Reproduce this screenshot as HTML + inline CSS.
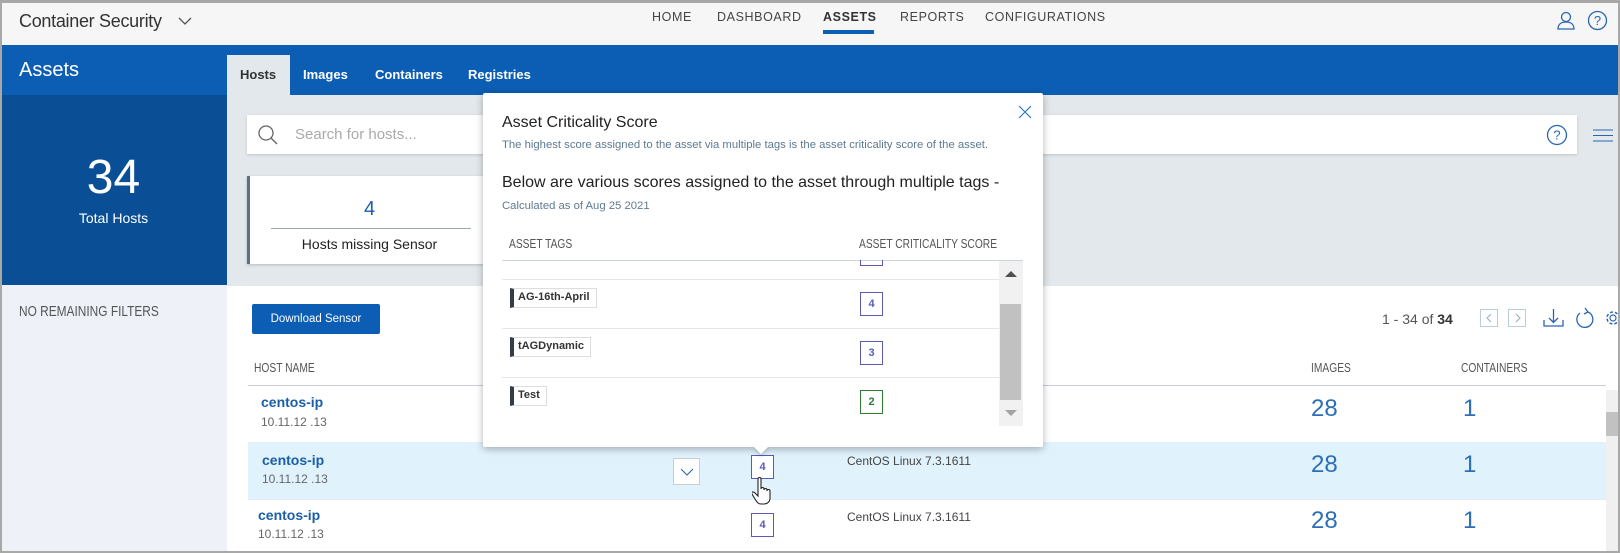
<!DOCTYPE html>
<html><head><meta charset="utf-8"><style>
*{box-sizing:border-box;margin:0;padding:0}
body{width:1620px;height:553px;overflow:hidden;font-family:"Liberation Sans",sans-serif;background:#fff;position:relative;color:#333}
.a{position:absolute}
.cond{font-family:"Liberation Sans",sans-serif;transform:scaleX(0.82);transform-origin:0 0;white-space:nowrap}
.nav{font-size:12.5px;color:#444;letter-spacing:0.6px;top:10px}
.badge{position:absolute;border:1px solid #5a5ab8;color:#5a5ab8;font-size:11px;font-weight:bold;text-align:center;width:23px;height:24px;line-height:22px;background:#fff}
.tag{position:absolute;border:1px solid #ddd;border-left:4px solid #333d47;font-size:11px;font-weight:bold;color:#333;padding:2px 6px 2px 4px;height:20px;background:#fff}
.hn{position:absolute;color:#1a5fa8;font-weight:bold;font-size:14px}
.ip{position:absolute;color:#666;font-size:12px}
.big{position:absolute;color:#2a6fb8;font-size:24px}
</style></head><body>
<div class="a" style="left:0;top:0;width:1620px;height:553px;border:2px solid #a8a8a8;border-top-width:3px;z-index:50;pointer-events:none"></div>
<div class="a" style="left:0;top:0;width:1620px;height:45px;background:#f6f6f6"></div>
<div class="a" style="left:19px;top:11px;font-size:18px;color:#333;letter-spacing:-0.3px">Container Security</div>
<svg class="a" style="left:178px;top:17px" width="14" height="9"><path d="M1 1l6 6 6-6" stroke="#555" fill="none" stroke-width="1.3"/></svg>
<div class="a nav" style="left:652px">HOME</div>
<div class="a nav" style="left:717px">DASHBOARD</div>
<div class="a nav" style="left:823px;font-weight:bold;color:#333">ASSETS</div>
<div class="a" style="left:823px;top:30px;width:51px;height:4px;background:#0b5eb3"></div>
<div class="a nav" style="left:900px">REPORTS</div>
<div class="a nav" style="left:985px">CONFIGURATIONS</div>
<svg class="a" style="left:1557px;top:11px" width="18" height="19"><circle cx="9" cy="6" r="4.5" stroke="#2a66b0" fill="none" stroke-width="1.3"/><path d="M1 18c0-5 3.5-7 8-7s8 2 8 7z" stroke="#2a66b0" fill="none" stroke-width="1.3"/></svg>
<svg class="a" style="left:1587px;top:10px" width="21" height="21"><circle cx="10.5" cy="10.5" r="9" stroke="#2a66b0" fill="none" stroke-width="1.3"/><text x="10.5" y="15" text-anchor="middle" font-size="13" fill="#2a66b0" font-family="Liberation Sans">?</text></svg>
<div class="a" style="left:0;top:45px;width:1620px;height:50px;background:#0b5eb3"></div>
<div class="a" style="left:19px;top:59px;font-size:20px;color:#fff">Assets</div>
<div class="a" style="left:227px;top:55px;width:63px;height:40px;background:#e3e8ec"></div>
<div class="a" style="left:240px;top:67px;font-size:13px;font-weight:bold;color:#333">Hosts</div>
<div class="a" style="left:303px;top:67px;font-size:13px;font-weight:bold;color:#fff">Images</div>
<div class="a" style="left:375px;top:67px;font-size:13px;font-weight:bold;color:#fff">Containers</div>
<div class="a" style="left:468px;top:67px;font-size:13px;font-weight:bold;color:#fff">Registries</div>
<div class="a" style="left:0;top:95px;width:227px;height:190px;background:#0a4f95"></div>
<div class="a" style="left:0;top:150px;width:227px;text-align:center;font-size:48px;color:#fff">34</div>
<div class="a" style="left:0;top:210px;width:227px;text-align:center;font-size:14px;color:#fff">Total Hosts</div>
<div class="a" style="left:0;top:285px;width:227px;height:268px;background:#eef2f8"></div>
<div class="a cond" style="left:19px;top:304px;font-size:14.5px;color:#555">NO REMAINING FILTERS</div>
<div class="a" style="left:227px;top:95px;width:1393px;height:191px;background:#e3e8ec"></div>
<div class="a" style="left:247px;top:115px;width:1330px;height:39px;background:#fff;box-shadow:0 1px 3px rgba(0,0,0,.15)"></div>
<svg class="a" style="left:257px;top:124px" width="22" height="22"><circle cx="9" cy="9" r="7" stroke="#666" fill="none" stroke-width="1.3"/><path d="M14 14l6 6" stroke="#666" stroke-width="1.4"/></svg>
<div class="a" style="left:295px;top:126px;font-size:15px;color:#aaa">Search for hosts...</div>
<svg class="a" style="left:1546px;top:124px" width="22" height="22"><circle cx="11" cy="11" r="9.5" stroke="#2a66b0" fill="none" stroke-width="1.3"/><text x="11" y="15.5" text-anchor="middle" font-size="13" fill="#2a66b0" font-family="Liberation Sans">?</text></svg>
<svg class="a" style="left:1593px;top:129px" width="22" height="14"><path d="M0 1h20M0 6.5h20M0 12h20" stroke="#2a66b0" stroke-width="1"/></svg>
<div class="a" style="left:247px;top:176px;width:250px;height:88px;background:#fff;border-left:3px solid #5d7080;box-shadow:0 1px 3px rgba(0,0,0,.2)"></div>
<div class="a" style="left:268px;top:198px;width:203px;text-align:center;font-size:20px;color:#1a5fa8">4</div>
<div class="a" style="left:271px;top:228px;width:200px;height:1px;background:#9aa8b5"></div>
<div class="a" style="left:268px;top:236px;width:203px;text-align:center;font-size:14px;color:#222">Hosts missing Sensor</div>
<div class="a" style="left:252px;top:304px;width:128px;height:30px;background:#0b5eb3;border-radius:2px;color:#fff;font-size:11.5px;text-align:center;line-height:30px">Download Sensor</div>
<div class="a" style="left:1382px;top:311px;font-size:14px;color:#555">1 - 34 of <b style="color:#333">34</b></div>
<div class="a" style="left:1480px;top:309px;width:18px;height:18px;border:1px solid #b8cde0"></div>
<svg class="a" style="left:1485px;top:313px" width="8" height="10"><path d="M6 1L2 5l4 4" stroke="#9ab" fill="none"/></svg>
<div class="a" style="left:1508px;top:309px;width:18px;height:18px;border:1px solid #b8cde0"></div>
<svg class="a" style="left:1514px;top:313px" width="8" height="10"><path d="M2 1l4 4-4 4" stroke="#9ab" fill="none"/></svg>
<svg class="a" style="left:1543px;top:308px" width="22" height="20"><path d="M1 12v6h19v-6M10.5 1v13M6 10l4.5 4.5L15 10" stroke="#2a66b0" fill="none" stroke-width="1.3"/></svg>
<svg class="a" style="left:1574px;top:307px" width="20" height="22"><path d="M14 5a8 8 0 1 1-8 1" stroke="#2a66b0" fill="none" stroke-width="1.3"/><path d="M11 1l3 4-4 2" stroke="#2a66b0" fill="none" stroke-width="1.3"/></svg>
<svg class="a" style="left:1603px;top:308px" width="17" height="20"><circle cx="10" cy="10" r="6" stroke="#2a66b0" fill="none" stroke-width="1.5" stroke-dasharray="3 2"/><circle cx="10" cy="10" r="3" stroke="#2a66b0" fill="none" stroke-width="1.2"/></svg>
<div class="a cond" style="left:254px;top:361px;font-size:12.5px;color:#555">HOST NAME</div>
<div class="a cond" style="left:1311px;top:361px;font-size:12.5px;color:#555">IMAGES</div>
<div class="a cond" style="left:1461px;top:361px;font-size:12.5px;color:#555">CONTAINERS</div>
<div class="a" style="left:248px;top:385px;width:1358px;height:1px;background:#ccd"></div>
<div class="a" style="left:248px;top:442px;width:1358px;height:57px;background:#e0f2fc"></div>
<div class="a" style="left:248px;top:499px;width:1358px;height:1px;background:#e3ecf2"></div>
<div class="hn" style="left:261px;top:394px">centos-ip</div><div class="ip" style="left:261px;top:415px">10.11.12 .13</div>
<div class="hn" style="left:262px;top:452px">centos-ip</div><div class="ip" style="left:262px;top:472px">10.11.12 .13</div>
<div class="hn" style="left:258px;top:507px">centos-ip</div><div class="ip" style="left:258px;top:527px">10.11.12 .13</div>
<div class="a" style="left:673px;top:458px;width:27px;height:27px;background:#fff;border:1px solid #ccc"></div>
<svg class="a" style="left:680px;top:468px" width="14" height="8"><path d="M1 1l6 6 6-6" stroke="#2a66b0" fill="none" stroke-width="1.1"/></svg>
<div class="badge" style="left:751px;top:455px">4</div>
<div class="badge" style="left:751px;top:513px">4</div>
<svg class="a" style="left:752px;top:476px" width="26" height="30"><path d="M6 3c0-2 3-2 3 0v10c0-2 3-2 3 0v1c0-2 3-2 3 0v1c0-2 3-2 3 0v7c0 4-3 6-6 6h-3c-3 0-4-2-6-5l-3-5c-1-2 1-3 3-1l3 3z" fill="#fff" stroke="#222" stroke-width="1.1"/></svg>
<div class="a" style="left:847px;top:454px;font-size:12px;color:#444">CentOS Linux 7.3.1611</div>
<div class="a" style="left:847px;top:510px;font-size:12px;color:#444">CentOS Linux 7.3.1611</div>
<div class="big" style="left:1311px;top:395px">28</div><div class="big" style="left:1463px;top:395px">1</div>
<div class="big" style="left:1311px;top:451px">28</div><div class="big" style="left:1463px;top:451px">1</div>
<div class="big" style="left:1311px;top:507px">28</div><div class="big" style="left:1463px;top:507px">1</div>
<div class="a" style="left:1606px;top:390px;width:14px;height:163px;background:#f0f0f0"></div>
<div class="a" style="left:1606px;top:412px;width:12px;height:24px;background:#c1c1c1"></div>
<div class="a" style="left:483px;top:93px;width:560px;height:354px;background:#fff;box-shadow:0 2px 8px rgba(0,0,0,.3);border-radius:2px"></div>
<div class="a" style="left:756px;top:442px;width:10px;height:10px;background:#fff;transform:rotate(45deg);box-shadow:2px 2px 3px rgba(0,0,0,.15)"></div>
<svg class="a" style="left:1018px;top:105px" width="14" height="14"><path d="M1 1l12 12M13 1L1 13" stroke="#2a7ac0" stroke-width="1.2"/></svg>
<div class="a" style="left:502px;top:114px;font-size:16px;color:#222">Asset Criticality Score</div>
<div class="a" style="left:502px;top:139px;font-size:11.3px;color:#5d7a90;white-space:nowrap">The highest score assigned to the asset via multiple tags is the asset criticality score of the asset.</div>
<div class="a" style="left:502px;top:174px;font-size:16px;color:#222;white-space:nowrap">Below are various scores assigned to the asset through multiple tags -</div>
<div class="a" style="left:502px;top:200px;font-size:11.3px;color:#5d7a90">Calculated as of Aug 25 2021</div>
<div class="a cond" style="left:509px;top:237px;font-size:12.5px;color:#555">ASSET TAGS</div>
<div class="a cond" style="left:859px;top:237px;font-size:12.5px;color:#555">ASSET CRITICALITY SCORE</div>
<div class="a" style="left:502px;top:260px;width:521px;height:1px;background:#ccd5de"></div>
<div class="a" style="left:860px;top:260px;width:23px;height:6px;border:1px solid #5a5ab8;border-top:none"></div>
<div class="a" style="left:502px;top:279px;width:497px;height:1px;background:#e3e8ec"></div>
<div class="a" style="left:502px;top:328px;width:497px;height:1px;background:#e3e8ec"></div>
<div class="a" style="left:502px;top:377px;width:497px;height:1px;background:#e3e8ec"></div>
<div class="tag" style="left:510px;top:288px">AG-16th-April</div>
<div class="tag" style="left:510px;top:337px">tAGDynamic</div>
<div class="tag" style="left:510px;top:386px">Test</div>
<div class="badge" style="left:860px;top:292px">4</div>
<div class="badge" style="left:860px;top:341px">3</div>
<div class="badge" style="left:860px;top:390px;border-color:#2e7d32;color:#2e7d32">2</div>
<div class="a" style="left:999px;top:261px;width:24px;height:165px;background:#f1f1f1"></div>
<div class="a" style="left:1000px;top:304px;width:21px;height:96px;background:#c1c1c1"></div>
<svg class="a" style="left:1005px;top:270px" width="12" height="8"><path d="M0 7L6 1l6 6z" fill="#505050"/></svg>
<svg class="a" style="left:1005px;top:409px" width="12" height="8"><path d="M0 1l6 6 6-6z" fill="#a3a3a3"/></svg>
</body></html>
